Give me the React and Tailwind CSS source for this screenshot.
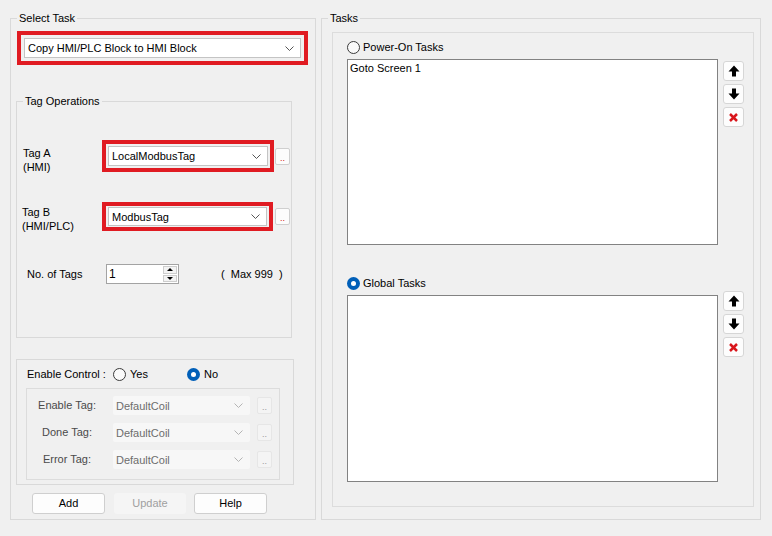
import React from "react";

function Chevron({ disabled }) {
  return (
    <svg width="9" height="5" viewBox="0 0 9 5" className="shrink-0">
      <polyline
        points="0.5,0.5 4.5,4.5 8.5,0.5"
        fill="none"
        stroke={disabled ? "#b4b4b4" : "#555555"}
        strokeWidth="1"
      />
    </svg>
  );
}

function Select({ text, className }) {
  return (
    <div
      className={
        "flex items-center justify-between bg-white border border-[#c4c4c4] pl-[3px] pr-[6px] leading-[14px] " +
        className
      }
    >
      <span>{text}</span>
      <Chevron />
    </div>
  );
}

function DisabledSelect({ text }) {
  return (
    <div className="ml-[6px] w-[137px] h-[19px] flex items-center justify-between bg-[#f7f7f7] rounded-[2px] pl-[3px] pr-[7px] text-[#6d6d6d] leading-[14px]">
      <span>{text}</span>
      <Chevron disabled />
    </div>
  );
}

function Ellipsis({ className, disabled }) {
  return (
    <div
      className={
        "w-[15px] h-[17px] rounded-[2px] flex items-end justify-center pb-[2px] text-[9px] leading-[8px] " +
        (disabled
          ? "border border-[#e6e6e6] bg-[#f4f4f4] text-[#9a9a9a] "
          : "border border-[#cfcfcf] bg-[#fcfcfc] text-[#d42020] ") +
        className
      }
    >
      ..
    </div>
  );
}

function Radio({ checked }) {
  if (checked) {
    return (
      <div className="w-[13px] h-[13px] rounded-full bg-[#005fb8] flex items-center justify-center shrink-0">
        <div className="w-[5px] h-[5px] rounded-full bg-white" />
      </div>
    );
  }
  return <div className="w-[13px] h-[13px] rounded-full border border-[#3a3a3a] bg-[#fafafa] shrink-0" />;
}

function GroupLabel({ children, className }) {
  return (
    <div className={"-mt-[8px] w-fit px-[2px] bg-[#f0f0f0] leading-[14px] " + (className || "")}>
      {children}
    </div>
  );
}

function UpIcon() {
  return (
    <svg width="12" height="12" viewBox="0 0 12 12">
      <polygon points="6,0.5 11.5,6.5 8,6.5 8,11.5 4,11.5 4,6.5 0.5,6.5" fill="#000" />
    </svg>
  );
}

function DownIcon() {
  return (
    <svg width="12" height="12" viewBox="0 0 12 12">
      <polygon points="6,11.5 11.5,5.5 8,5.5 8,0.5 4,0.5 4,5.5 0.5,5.5" fill="#000" />
    </svg>
  );
}

function XIcon() {
  return (
    <svg width="9" height="9" viewBox="0 0 9 9">
      <line x1="1" y1="1" x2="8" y2="8" stroke="#d9161c" strokeWidth="2.5" />
      <line x1="8" y1="1" x2="1" y2="8" stroke="#d9161c" strokeWidth="2.5" />
    </svg>
  );
}

function SideButtons({ className }) {
  const btn =
    "w-[21px] h-[20px] bg-[#fdfdfd] border border-[#d6d6d6] rounded-[3px] flex items-center justify-center";
  return (
    <div className={"ml-[5px] flex flex-col gap-[3px] " + className}>
      <div className={btn}>
        <UpIcon />
      </div>
      <div className={btn}>
        <DownIcon />
      </div>
      <div className={btn}>
        <XIcon />
      </div>
    </div>
  );
}

function Spin() {
  return (
    <div className="w-[73px] h-[20px] bg-white border border-[#a3a3a3] flex">
      <div className="flex-1 pl-[2px] leading-[18px] text-[12px]">1</div>
      <div className="w-[16px] h-full flex flex-col gap-[1px] p-[1px]">
        <div className="flex-1 bg-[#f3f3f3] border border-[#cdcdcd] flex items-center justify-center">
          <svg width="6" height="3" viewBox="0 0 6 3">
            <polygon points="3,0 6,3 0,3" fill="#000" />
          </svg>
        </div>
        <div className="flex-1 bg-[#f3f3f3] border border-[#cdcdcd] flex items-center justify-center">
          <svg width="6" height="3" viewBox="0 0 6 3">
            <polygon points="0,0 6,0 3,3" fill="#000" />
          </svg>
        </div>
      </div>
    </div>
  );
}

function DisabledRow({ label }) {
  return (
    <div className="h-[19px] flex items-center">
      <div className="w-[80px] text-center text-[#4a4a4a]">{label}</div>
      <DisabledSelect text="DefaultCoil" />
      <Ellipsis disabled className="ml-[7px]" />
    </div>
  );
}

function LeftGroup() {
  return (
    <div className="w-[306px] h-[502px] border border-[#d9d9d9] flex flex-col shrink-0">
      <GroupLabel className="ml-[6px]">Select Task</GroupLabel>

      <div className="mt-[6px] ml-[6px] w-[291px] border-[4px] border-[#e01b22] p-[3px]">
        <Select text="Copy HMI/PLC Block to HMI Block" className="h-[20px]" />
      </div>

      <div className="mt-[36px] ml-[5px] w-[276px] h-[237px] border border-[#d9d9d9] flex flex-col">
        <GroupLabel className="ml-[6px]">Tag Operations</GroupLabel>

        <div className="mt-[32px] h-[32px] flex items-start">
          <div className="ml-[6px] w-[79px] mt-[6px] leading-[14px]">
            Tag A
            <br />
            (HMI)
          </div>
          <div className="w-[172px] border-[4px] border-[#e01b22] p-[2px]">
            <Select text="LocalModbusTag" className="h-[20px]" />
          </div>
          <Ellipsis className="ml-[1px] mt-[8px]" />
        </div>

        <div className="mt-[30px] h-[29px] flex items-start">
          <div className="ml-[5px] w-[80px] mt-[3px] leading-[14px]">
            Tag B
            <br />
            (HMI/PLC)
          </div>
          <div className="w-[171px] border-[4px] border-[#e01b22] px-[2px] py-[1px]">
            <Select text="ModbusTag" className="h-[19px]" />
          </div>
          <Ellipsis className="ml-[2px] mt-[6px]" />
        </div>

        <div className="mt-[33px] flex items-center h-[20px]">
          <div className="ml-[10px] w-[79px]">No. of Tags</div>
          <Spin />
          <div className="ml-[42px] whitespace-pre">(  Max 999  )</div>
        </div>
      </div>

      <div className="mt-[21px] ml-[5px] w-[278px] h-[126px] border border-[#d9d9d9] flex flex-col">
        <div className="mt-[7px] h-[14px] flex items-center">
          <div className="ml-[10px] w-[86px]">Enable Control :</div>
          <div className="w-[74px] flex items-center">
            <Radio />
            <span className="ml-[4px]">Yes</span>
          </div>
          <div className="flex items-center">
            <Radio checked />
            <span className="ml-[4px]">No</span>
          </div>
        </div>
        <div className="mt-[7px] ml-[9px] w-[254px] h-[92px] border border-[#dcdcdc] flex flex-col pt-[7px] gap-[8px]">
          <DisabledRow label="Enable Tag:" />
          <DisabledRow label="Done Tag:" />
          <DisabledRow label="Error Tag:" />
        </div>
      </div>

      <div className="mt-[8px] ml-[21px] flex">
        <div className="w-[73px] h-[21px] bg-[#fdfdfd] border border-[#cfcfcf] rounded-[3px] flex items-center justify-center">
          Add
        </div>
        <div className="ml-[9px] w-[72px] h-[21px] bg-[#f5f5f5] rounded-[3px] flex items-center justify-center text-[#a0a0a0]">
          Update
        </div>
        <div className="ml-[8px] w-[73px] h-[21px] bg-[#fdfdfd] border border-[#cfcfcf] rounded-[3px] flex items-center justify-center">
          Help
        </div>
      </div>
    </div>
  );
}

function RightGroup() {
  return (
    <div className="ml-[5px] w-[440px] h-[502px] border border-[#d9d9d9] flex flex-col shrink-0">
      <GroupLabel className="ml-[6px]">Tasks</GroupLabel>
      <div className="mt-[7px] ml-[10px] w-[422px] h-[475px] border border-[#dcdcdc] flex flex-col">
        <div className="mt-[7px] ml-[14px] h-[14px] flex items-center">
          <Radio />
          <span className="ml-[3px]">Power-On Tasks</span>
        </div>
        <div className="mt-[5px] ml-[14px] flex items-start">
          <div className="w-[371px] h-[186px] bg-white border border-[#828282] px-[2px] pt-[1px] leading-[14px]">
            Goto Screen 1
          </div>
          <SideButtons className="mt-[2px]" />
        </div>

        <div className="mt-[31px] ml-[14px] h-[14px] flex items-center">
          <Radio checked />
          <span className="ml-[3px]">Global Tasks</span>
        </div>
        <div className="mt-[5px] ml-[14px] flex items-start">
          <div className="w-[371px] h-[187px] bg-white border border-[#828282]" />
          <SideButtons className="-mt-[4px]" />
        </div>
      </div>
    </div>
  );
}

export default function App() {
  return (
    <div className="w-[772px] h-[536px] bg-[#f0f0f0] font-['Liberation_Sans',Arial,sans-serif] text-[11px] text-black flex items-start pt-[18px] pl-[10px] overflow-hidden">
      <LeftGroup />
      <RightGroup />
    </div>
  );
}
